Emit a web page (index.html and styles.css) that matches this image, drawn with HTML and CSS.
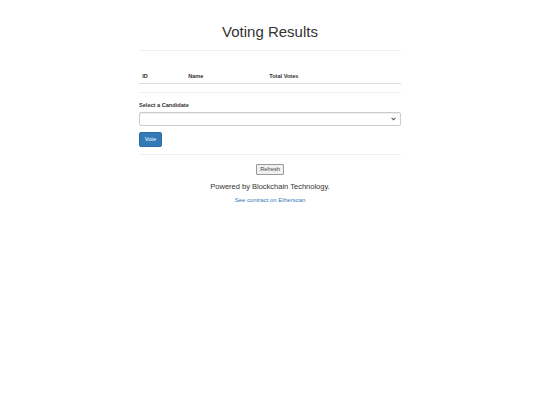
FILE: index.html
```html
<!DOCTYPE html>
<html lang="en">
<head>
<meta charset="utf-8">
<title>Voting Results</title>
<link rel="stylesheet" href="styles.css">
</head>
<body>
<div class="container">
  <h1 class="title">Voting Results</h1>
  <hr class="rule rule-title">
  <table class="results">
    <thead>
      <tr>
        <th class="col-id">ID</th>
        <th class="col-name">Name</th>
        <th>Total Votes</th>
      </tr>
    </thead>
    <tbody></tbody>
  </table>
  <hr class="rule rule-table">
  <form class="vote-form">
    <label class="field-label" for="candidate">Select a Candidate</label>
    <div class="select-wrap">
      <select id="candidate" class="select"></select>
      <svg class="select-arrow" width="5" height="4" viewBox="0 0 5 4"><polyline points="0.6,0.9 2.5,2.8 4.4,0.9" fill="none" stroke="#555" stroke-width="1.1"/></svg>
    </div>
    <button type="button" class="btn-vote">Vote</button>
  </form>
  <hr class="rule rule-form">
  <div class="footer">
    <button type="button" class="btn-refresh">Refresh</button>
    <p class="powered">Powered by Blockchain Technology.</p>
    <a class="contract-link" href="#">See contract on Etherscan</a>
  </div>
</div>
</body>
</html>
```

FILE: styles.css
```css
html, body {
  margin: 0;
  padding: 0;
  background: #fff;
}

body {
  font-family: "Liberation Sans", Arial, Helvetica, sans-serif;
  color: #333;
  font-size: 5.6px;
  line-height: 8px;
}

.container {
  width: 262px;
  margin: 0 auto;
  padding-top: 24px;
}

.title {
  margin: 0;
  font-size: 15px;
  line-height: 16px;
  font-weight: 500;
  text-align: center;
  color: #333;
}

.rule {
  border: 0;
  border-top: 1px solid #eee;
  height: 0;
  margin: 0;
}

.rule-title { margin-top: 10px; }
.rule-table { margin-top: 8px; }
.rule-form { margin-top: 7px; }

.results {
  width: 100%;
  border-collapse: collapse;
  margin-top: 18px;
}

.results th {
  text-align: left;
  font-weight: bold;
  padding: 3px 3.2px;
  line-height: 8px;
  border-bottom: 1px solid #ddd;
}

.col-id { width: 39.6px; }
.col-name { width: 74.6px; }

.vote-form {
  margin-top: 8px;
}

.field-label {
  display: block;
  font-weight: bold;
  line-height: 8px;
  margin-bottom: 3px;
}

.select-wrap {
  position: relative;
  margin-bottom: 6px;
}

.select {
  display: block;
  box-sizing: border-box;
  width: 100%;
  height: 14px;
  margin: 0;
  padding: 0 4px;
  appearance: none;
  -webkit-appearance: none;
  background: #fff;
  border: 1px solid #ccc;
  border-radius: 2px;
  box-shadow: inset 0 1px 1px rgba(0, 0, 0, 0.075);
  font-family: inherit;
  font-size: 5.6px;
}

.select-arrow {
  position: absolute;
  right: 5px;
  top: 5px;
}

.btn-vote {
  display: block;
  box-sizing: border-box;
  height: 15px;
  margin: 0;
  padding: 0 4.8px;
  background: #337ab7;
  border: 1px solid #2e6da4;
  border-radius: 2px;
  color: #fff;
  font-family: inherit;
  font-size: 5.6px;
  line-height: 13px;
}

.footer {
  display: flex;
  flex-direction: column;
  align-items: center;
  padding-top: 9px;
}

.btn-refresh {
  box-sizing: border-box;
  height: 11px;
  margin: 0;
  padding: 0 3px;
  background: #f0f0f0;
  border: 1px solid #999;
  border-radius: 1px;
  color: #444;
  font-family: inherit;
  font-size: 5.6px;
  font-weight: normal;
  line-height: 9px;
}

.powered {
  margin: 7px 0 0;
  font-size: 7.5px;
  line-height: 10px;
}

.contract-link {
  margin-top: 4px;
  font-size: 6px;
  line-height: 8px;
  color: #337ab7;
  text-decoration: none;
}
```
